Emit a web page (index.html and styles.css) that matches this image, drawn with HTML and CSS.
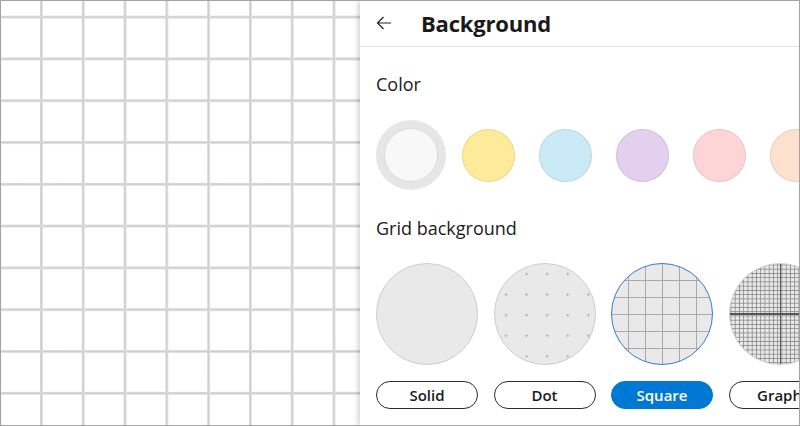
FILE: index.html
```html
<!DOCTYPE html>
<html>
<head>
<meta charset="utf-8">
<link rel="stylesheet" href="styles.css">
</head>
<body>
<div class="frame">
  <div class="canvas"></div>
  <aside class="panel">
    <header class="panel-header">
      <svg class="back" width="16" height="16" viewBox="0 0 16 16"><path d="M15 8H1.5M7.5 2L1.5 8l6 6" fill="none" stroke="#222" stroke-width="1.2"/></svg>
      <h1 class="title">Background</h1>
    </header>
    <div class="section-label color-label">Color</div>
    <div class="color-row">
      <div class="swatch-box selected"><span class="swatch white"></span></div>
      <div class="swatch-box"><span class="swatch yellow"></span></div>
      <div class="swatch-box"><span class="swatch blue"></span></div>
      <div class="swatch-box"><span class="swatch purple"></span></div>
      <div class="swatch-box"><span class="swatch pink"></span></div>
      <div class="swatch-box"><span class="swatch orange"></span></div>
    </div>
    <div class="section-label grid-label">Grid background</div>
    <div class="grid-row">
      <div class="grid-item">
        <div class="preview solid"></div>
        <button class="pill">Solid</button>
      </div>
      <div class="grid-item">
        <div class="preview dot"></div>
        <button class="pill">Dot</button>
      </div>
      <div class="grid-item">
        <div class="preview square"></div>
        <button class="pill active">Square</button>
      </div>
      <div class="grid-item">
        <div class="preview graph"></div>
        <button class="pill">Graph</button>
      </div>
    </div>
  </aside>
</div>
</body>
</html>
```
FILE: styles.css
```css
* { box-sizing: border-box; }
html, body { margin: 0; padding: 0; background: #fff; }
body { font-family: "Segoe UI", "Open Sans", "Noto Sans", sans-serif; color: #1a1a1a; }
.frame {
  width: 800px; height: 426px;
  border: 1px solid #a3a3a3;
  display: flex;
  overflow: hidden;
}
.canvas {
  flex: 1;
  background-color: #fff;
  background-image:
    linear-gradient(to right, #e2e2e2 0, #cdcdcd 1px, #cdcdcd 2px, #e2e2e2 2px, #e2e2e2 2.5px, transparent 2.5px),
    linear-gradient(to bottom, #e2e2e2 0, #cdcdcd 1px, #cdcdcd 2px, #e2e2e2 2px, #e2e2e2 2.5px, transparent 2.5px);
  background-size: 41.8px 41.8px;
  background-position: 39px 14.7px;
}
.panel {
  width: 439px;
  background: #fff;
  box-shadow: -2px 0 5px rgba(0,0,0,0.18);
  position: relative;
  overflow: hidden;
  padding-left: 16px;
}
.panel-header {
  height: 46px;
  margin-left: -16px;
  padding-left: 16px;
  border-bottom: 1px solid #e3e3e3;
  display: flex;
  align-items: center;
}
.back { flex: none; margin-top: -2px; }
.title {
  margin: -2px 0 0 29px;
  font-size: 22px;
  font-weight: 700;
  line-height: 30px;
  letter-spacing: -0.2px;
}
.section-label {
  font-size: 18px;
  line-height: 24px;
}
.color-label { margin-top: 25px; }
.grid-label { margin-top: 26px; }
.color-row {
  display: flex;
  gap: 7px;
  margin-top: 24px;
  width: 600px;
}
.swatch-box {
  width: 70px; height: 70px;
  flex: none;
  border-radius: 50%;
  display: flex; align-items: center; justify-content: center;
}
.swatch-box.selected { background: #e6e6e6; }
.swatch {
  width: 53px; height: 53px;
  border-radius: 50%;
  border: 1px solid rgba(0,0,0,0.08);
}
.swatch.white { background: #f8f8f8; border-color: #dcdcdc; width: 54px; height: 54px; }
.swatch.yellow { background: #feeb9a; }
.swatch.blue { background: #c9eaf6; }
.swatch.purple { background: #e2d0ee; }
.swatch.pink { background: #fdd5d6; }
.swatch.orange { background: #fde0cd; }

.grid-row {
  display: flex;
  gap: 15.5px;
  margin-top: 23px;
  width: 600px;
}
.grid-item { width: 102px; flex: none; display: flex; flex-direction: column; gap: 16px; }
.preview {
  width: 102px; height: 102px;
  border-radius: 50%;
  background-color: #e9e9e9;
  border: 1px solid #cdcdcd;
}
.preview.dot {
  background-image: radial-gradient(circle, #9a9a9a 0.8px, transparent 1.2px);
  background-size: 20.6px 20.6px;
  background-position: 0.7px -0.3px;
}
.preview.square {
  border: 1.5px solid #2f7fd0;
  background-image:
    linear-gradient(to right, #a9a9a9 1px, transparent 1px),
    linear-gradient(to bottom, #a9a9a9 1px, transparent 1px);
  background-size: 17px 17px;
  background-position: -1px -1px;
}
.preview.graph {
  background-image:
    linear-gradient(to right, transparent 49.5px, #555 49.5px, #555 51px, transparent 51px),
    linear-gradient(to bottom, transparent 49.5px, #555 49.5px, #555 51px, transparent 51px),
    linear-gradient(to right, #8d8d8d 1px, transparent 1px),
    linear-gradient(to bottom, #8d8d8d 1px, transparent 1px);
  background-size: 100% 100%, 100% 100%, 4.25px 4.25px, 4.25px 4.25px;
  background-position: 0 0, 0 0, 0.5px 0.5px, 0.5px 0.5px;
  background-repeat: no-repeat, no-repeat, repeat, repeat;
}
.pill {
  width: 102px; height: 28px;
  border-radius: 14px;
  border: 1px solid #2a2a2a;
  background: #fff;
  font-family: inherit;
  font-size: 15px;
  font-weight: 600;
  color: #1a1a1a;
  padding: 0;
  white-space: nowrap;
}
.pill.active {
  background: #0078d4;
  border-color: #0078d4;
  color: #fff;
}
```
